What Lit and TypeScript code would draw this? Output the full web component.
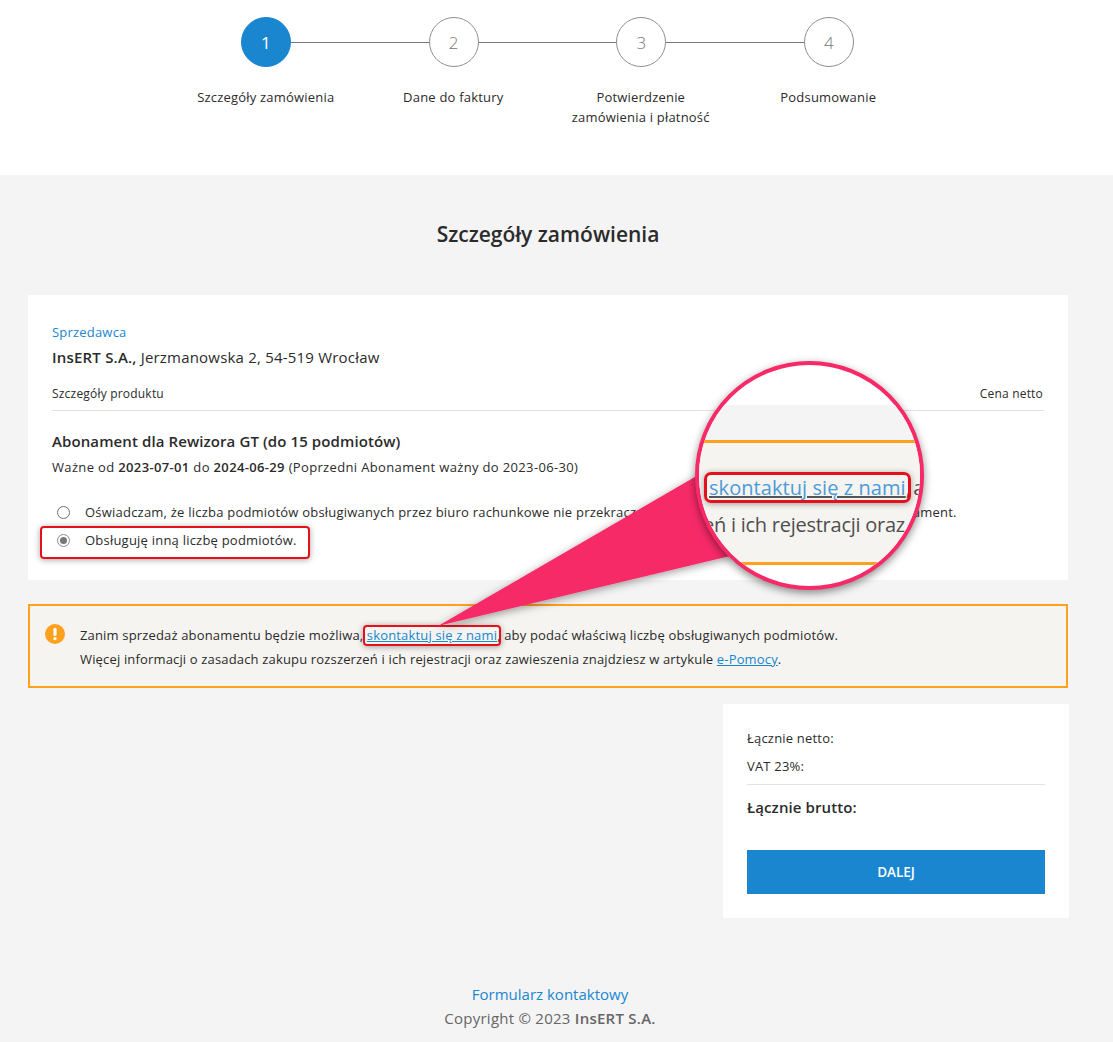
import { LitElement, html, css } from 'lit';
import { customElement } from 'lit/decorators.js';

const STEPS = [
  ['1', 'Szczegóły zamówienia'],
  ['2', 'Dane do faktury'],
  ['3', 'Potwierdzenie\nzamówienia i płatność'],
  ['4', 'Podsumowanie'],
];

@customElement('app-root')
export class AppRoot extends LitElement {
  static styles = css`
    :host {
      display: block;
      position: relative;
      height: 1042px;
      overflow: hidden;
      background: #fff;
      color: #2b2b2b;
      font-family: 'Open Sans', 'Noto Sans', sans-serif;
      font-size: 13px;
      letter-spacing: 0.2px;
    }
    a {
      color: #1a86d0;
    }

    /* stepper */
    .stepper {
      height: 175px;
      padding-top: 17px;
      box-sizing: border-box;
    }
    .track {
      display: flex;
      align-items: center;
      width: 613px;
      margin-left: 241px;
    }
    .circle {
      flex: none;
      width: 50px;
      height: 50px;
      box-sizing: border-box;
      border: 1px solid #8f8f8f;
      border-radius: 50%;
      display: flex;
      align-items: center;
      justify-content: center;
      font-size: 17px;
      font-weight: 300;
      color: #777;
    }
    .circle.active {
      background: #1a86d0;
      border-color: #1a86d0;
      color: #fff;
      font-weight: 400;
    }
    .line {
      flex: 1;
      height: 1px;
      background: #777;
    }
    .labels {
      display: grid;
      grid-template-columns: repeat(4, 187.5px);
      margin: 20px 0 0 172px;
      line-height: 20px;
      text-align: center;
      white-space: pre-line;
    }

    /* main area */
    .main {
      background: #f4f4f4;
      height: 867px;
      padding: 44px 0 0 28px;
      box-sizing: border-box;
    }
    .wrap {
      width: 1040px;
    }
    h1 {
      margin: 0 0 46px;
      font-size: 21px;
      font-weight: 600;
      line-height: 30px;
      text-align: center;
      letter-spacing: 0;
    }
    .card {
      background: #fff;
      padding: 24px 24px 26px;
      box-sizing: border-box;
    }
    .seller-label {
      color: #1a86d0;
      line-height: 26px;
    }
    .seller {
      font-size: 15px;
      line-height: 24px;
    }
    b {
      font-weight: 600;
    }
    .head {
      display: flex;
      justify-content: space-between;
      margin-top: 15px;
      padding-bottom: 6px;
      border-bottom: 1px solid #e2e2e2;
      font-size: 12px;
      line-height: 20px;
    }
    .head span:last-child {
      margin-right: 1px;
    }
    .product {
      margin-top: 18px;
      font-size: 15px;
      font-weight: 600;
      line-height: 24px;
      letter-spacing: 0.1px;
    }
    .valid {
      margin-top: 2px;
      line-height: 24px;
      letter-spacing: 0.35px;
    }
    .options {
      margin-top: 19px;
    }
    .option {
      display: flex;
      align-items: center;
      height: 28px;
      padding-left: 5px;
      white-space: nowrap;
      letter-spacing: 0.22px;
    }
    .radio {
      flex: none;
      width: 13px;
      height: 13px;
      box-sizing: border-box;
      margin-right: 15px;
      border: 1px solid #6e6e6e;
      border-radius: 50%;
      background: #fff;
      display: flex;
      align-items: center;
      justify-content: center;
    }
    .radio.on {
      border-color: #8c8c8c;
    }
    .radio.on::after {
      content: '';
      width: 7px;
      height: 7px;
      border-radius: 50%;
      background: #777;
    }

    .alert {
      display: flex;
      gap: 15px;
      margin-top: 24px;
      padding: 17px 15px 15px;
      background: #f5f4f0;
      border: 2px solid #ffa11d;
      line-height: 24px;
      letter-spacing: 0.16px;
    }
    .alert svg {
      flex: none;
      margin-top: 1px;
    }

    .summary-row {
      display: flex;
      justify-content: flex-end;
      margin: 16px -1px 0 0;
    }
    .summary {
      width: 346px;
      padding: 20px 24px 24px;
      box-sizing: border-box;
      background: #fff;
      line-height: 28px;
    }
    .sep {
      margin: 4px 0 8px;
      border-top: 1px solid #e2e2e2;
    }
    .gross {
      font-size: 15px;
      font-weight: 600;
      letter-spacing: 0.1px;
    }
    button {
      display: block;
      width: 100%;
      height: 44px;
      margin-top: 29px;
      border: 0;
      background: #1a86d0;
      color: #fff;
      font: 600 13.5px 'Open Sans', sans-serif;
    }

    .footer {
      width: 1100px;
      margin-top: 64px;
      margin-left: -28px;
      text-align: center;
      font-size: 15px;
      line-height: 24px;
      color: #666;
      letter-spacing: 0.25px;
    }
    .footer a {
      text-decoration: none;
      letter-spacing: 0;
    }

    /* annotation overlay */
    .callout {
      position: absolute;
      left: 0;
      top: 0;
      pointer-events: none;
    }
    .mark {
      position: absolute;
      box-sizing: border-box;
      border: 2px solid #e4101c;
      border-radius: 4px;
      box-shadow: 0 1px 6px rgba(0, 0, 0, 0.35);
    }
    .mark.radio-mark {
      left: 40px;
      top: 526px;
      width: 270px;
      height: 33px;
    }
    .mark.link-mark {
      left: 363px;
      top: 625px;
      width: 138px;
      height: 21px;
    }
    .lens {
      position: absolute;
      left: 695px;
      top: 361px;
      width: 229px;
      height: 229px;
      box-sizing: border-box;
      border: 4px solid #f72a67;
      border-radius: 50%;
      overflow: hidden;
      background: #fff;
      box-shadow: 0 3px 9px rgba(0, 0, 0, 0.45);
    }
    .lens-gap {
      height: 35px;
      margin-top: 40px;
      background: #f4f4f4;
    }
    .lens-alert {
      box-sizing: border-box;
      height: 125px;
      padding: 26px 0 0 10px;
      border-top: 3px solid #ffa11d;
      border-bottom: 3px solid #ffa11d;
      background: #f5f4f0;
      font-size: 20px;
      line-height: 37px;
      white-space: nowrap;
      color: #4f4f4f;
      letter-spacing: 0.07px;
    }
    .lens-alert a {
      color: #4c9bd8;
      text-decoration-color: #555;
      word-spacing: 0;
    }
    .lens-alert .tail {
      word-spacing: -3px;
    }
    .lens-alert .second {
      margin-left: -6px;
      letter-spacing: -0.25px;
    }
    .mark.lens-mark {
      left: 5px;
      top: 107px;
      width: 207px;
      height: 31px;
      border-width: 3px;
      border-radius: 7px;
    }
  `;

  render() {
    return html`
      <div class="stepper">
        <div class="track">
          ${STEPS.map(
            ([n], i) => html`
              ${i > 0 ? html`<span class="line"></span>` : ''}
              <span class="circle ${i === 0 ? 'active' : ''}">${n}</span>
            `
          )}
        </div>
        <div class="labels">${STEPS.map(([, label]) => html`<div>${label}</div>`)}</div>
      </div>

      <div class="main">
        <div class="wrap">
          <h1>Szczegóły zamówienia</h1>

          <section class="card">
            <div class="seller-label">Sprzedawca</div>
            <div class="seller"><b>InsERT S.A.,</b> Jerzmanowska 2, 54-519 Wrocław</div>
            <div class="head"><span>Szczegóły produktu</span><span>Cena netto</span></div>
            <div class="product">Abonament dla Rewizora GT (do 15 podmiotów)</div>
            <div class="valid">
              Ważne od <b>2023-07-01</b> do <b>2024-06-29</b> (Poprzedni Abonament ważny do 2023-06-30)
            </div>
            <div class="options">
              <div class="option">
                <span class="radio"></span>
                Oświadczam, że liczba podmiotów obsługiwanych przez biuro rachunkowe nie przekracza limitu podmiotów
                określonego przez Abonament.
              </div>
              <div class="option"><span class="radio on"></span>Obsługuję inną liczbę podmiotów.</div>
            </div>
          </section>

          <section class="alert">
            <svg width="20" height="20" viewBox="0 0 20 20">
              <circle cx="10" cy="10" r="10" fill="#ffa11d" />
              <rect x="8.4" y="4" width="3.2" height="8" rx="1.4" fill="#fff" />
              <circle cx="10" cy="14.6" r="1.7" fill="#fff" />
            </svg>
            <div>
              Zanim sprzedaż abonamentu będzie możliwa, <a href="#">skontaktuj się z nami</a>, aby podać właściwą
              liczbę obsługiwanych podmiotów.<br />
              Więcej informacji o zasadach zakupu rozszerzeń i ich rejestracji oraz zawieszenia znajdziesz w artykule
              <a href="#">e-Pomocy</a>.
            </div>
          </section>

          <div class="summary-row">
            <aside class="summary">
              <div>Łącznie netto:</div>
              <div>VAT 23%:</div>
              <div class="sep"></div>
              <div class="gross">Łącznie brutto:</div>
              <button>DALEJ</button>
            </aside>
          </div>

          <footer class="footer">
            <a href="#">Formularz kontaktowy</a><br />
            Copyright © 2023 <b>InsERT S.A.</b>
          </footer>
        </div>
      </div>

      <div class="mark radio-mark"></div>
      <div class="mark link-mark"></div>
      <svg class="callout" width="1113" height="1042">
        <defs>
          <filter id="shadow" x="-10%" y="-10%" width="120%" height="130%">
            <feDropShadow dx="0" dy="2" stdDeviation="4" flood-color="#000" flood-opacity="0.4" />
          </filter>
        </defs>
        <polygon points="438,626 700,474 730,556" fill="#f72a67" filter="url(#shadow)" />
      </svg>
      <div class="lens">
        <div class="lens-gap"></div>
        <div class="lens-alert">
          <div class="tail"><a href="#">skontaktuj się z nami</a>, a</div>
          <div class="second">eń i ich rejestracji oraz</div>
        </div>
        <div class="mark lens-mark"></div>
      </div>
    `;
  }
}
